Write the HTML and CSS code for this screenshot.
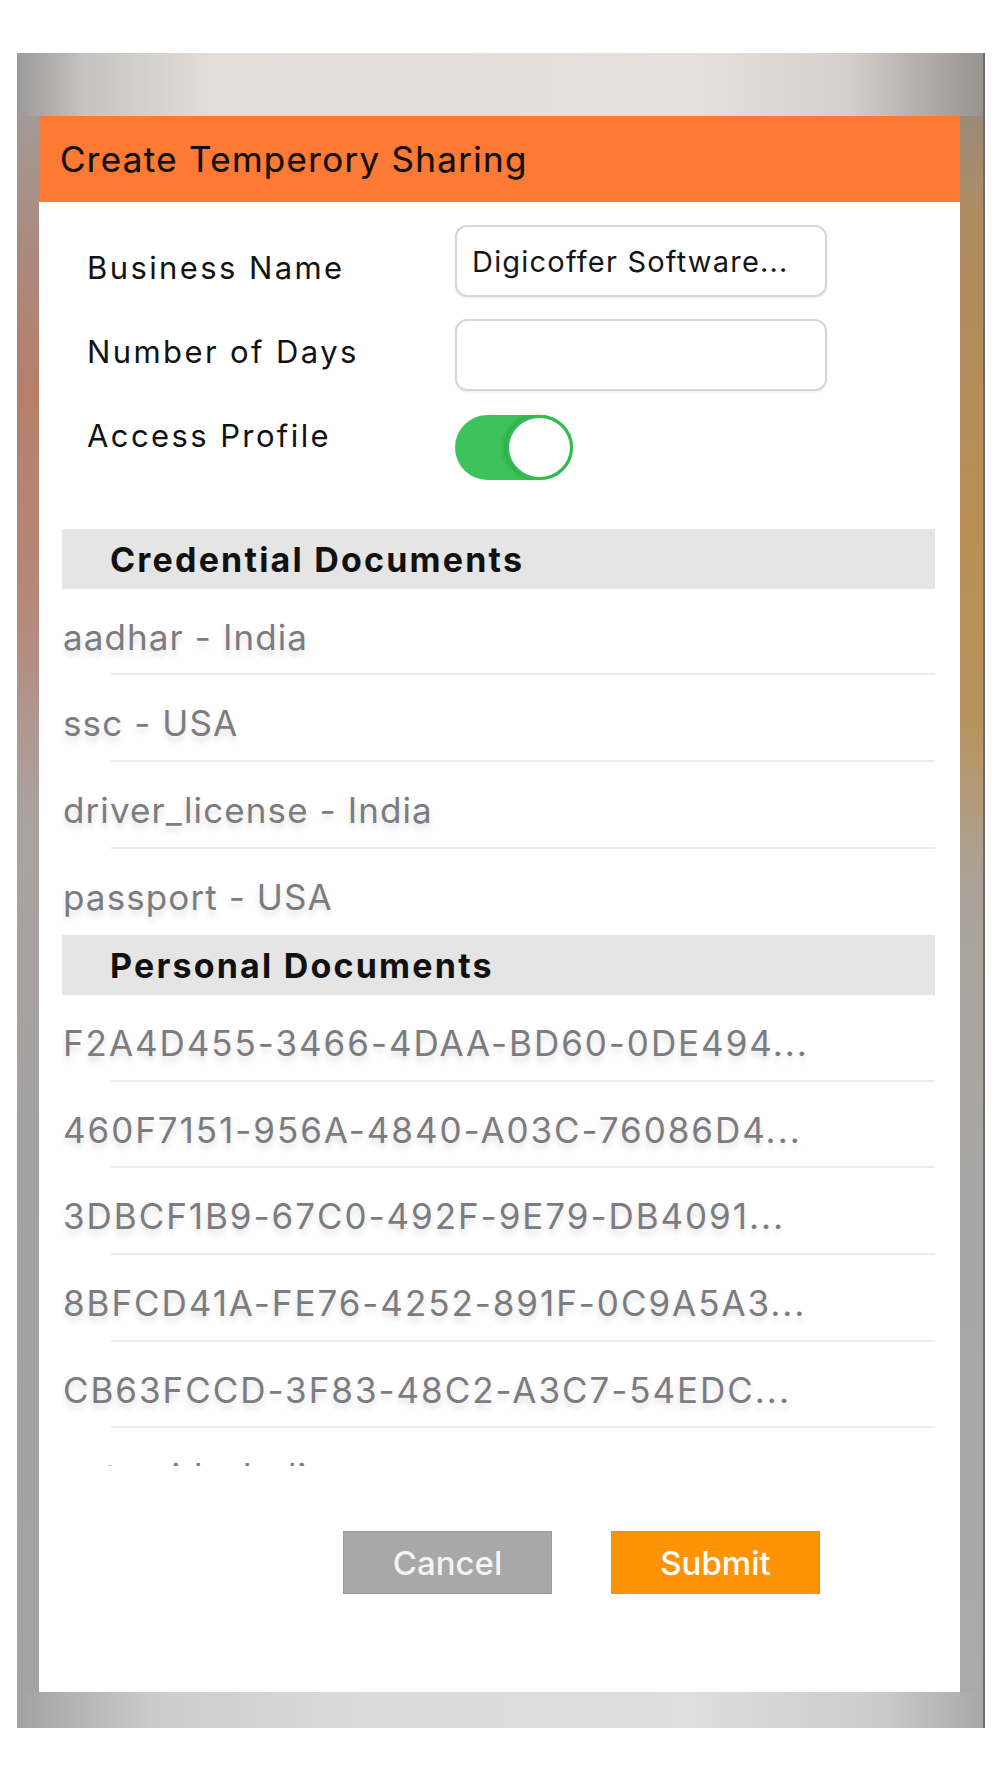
FILE: index.html
```html
<!DOCTYPE html>
<html lang="en">
<head>
<meta charset="utf-8">
<title>Create Temperory Sharing</title>
<link rel="stylesheet" href="styles.css">
</head>
<body>
<div class="frame">
  <div class="panel">
    <div class="header"><span class="title">Create Temperory Sharing</span></div>
    <div class="form">
      <div class="labels">
        <div class="label">Business Name</div>
        <div class="label">Number of Days</div>
        <div class="label">Access Profile</div>
      </div>
      <div class="controls">
        <div class="input">Digicoffer Software...</div>
        <div class="input"></div>
        <div class="toggle"><div class="knob"></div></div>
      </div>
    </div>
    <div class="list">
      <div class="section">Credential Documents</div>
      <div class="item">aadhar - India</div>
      <div class="item">ssc - USA</div>
      <div class="item">driver_license - India</div>
      <div class="item last">passport - USA</div>
      <div class="section">Personal Documents</div>
      <div class="item guid">F2A4D455-3466-4DAA-BD60-0DE494...</div>
      <div class="item guid">460F7151-956A-4840-A03C-76086D4...</div>
      <div class="item guid">3DBCF1B9-67C0-492F-9E79-DB4091...</div>
      <div class="item guid">8BFCD41A-FE76-4252-891F-0C9A5A3...</div>
      <div class="item guid">CB63FCCD-3F83-48C2-A3C7-54EDC...</div>
      <div class="item">voter_id - India</div>
    </div>
    <div class="actions">
      <div class="btn cancel">Cancel</div>
      <div class="btn submit">Submit</div>
    </div>
  </div>
</div>
</body>
</html>
```
FILE: styles.css
```css
html, body {
  margin: 0;
  padding: 0;
  background: #ffffff;
}

body {
  font-family: Inter, "Liberation Sans", Arial, sans-serif;
  width: 1000px;
  height: 1778px;
  overflow: hidden;
}

.frame {
  margin: 53px 0 0 17px;
  width: 968px;
  height: 1675px;
  box-sizing: border-box;
  padding: 63px 23px 36px 22px;
  border-right: 2px solid #6e6a66;
  background:
    linear-gradient(to right, #9a9a9a 0, #c6c3c0 7%, #e2ddd8 20%, #e6e1dc 70%, #d6d0ca 86%, #979390 100%) top / 100% 63px no-repeat,
    linear-gradient(to right, #a2a2a2 0, #cbcbcb 14%, #dbdbdb 35%, #dedede 70%, #cacaca 90%, #a8a8a8 100%) bottom / 100% 36px no-repeat,
    linear-gradient(to bottom, #a0a0a0 0, #ab8a7e 12%, #b67e6c 20%, #b58a7c 34%, #aaa3a1 46%, #a2a2a2 66%, #a4a4a4 100%) left / 22px 100% no-repeat,
    linear-gradient(to bottom, #8d8884 0, #b08c62 10%, #ba8e56 28%, #b8935f 40%, #aba39a 50%, #a7a7a7 68%, #aaaaaa 100%) right / 23px 100% no-repeat;
}

.panel {
  width: 921px;
  height: 1576px;
  background: #ffffff;
  display: flex;
  flex-direction: column;
}

.header {
  height: 86px;
  flex: none;
  background: #fd7a35;
  display: flex;
  align-items: center;
  padding-left: 21px;
}

.title {
  font-size: 35px;
  letter-spacing: 1.3px;
  color: #111111;
  text-shadow: 0 0 1px rgba(0, 0, 0, 0.35);
}

.form {
  display: flex;
  padding-left: 48px;
  height: 278px;
  flex: none;
}

.labels {
  width: 368px;
  display: flex;
  flex-direction: column;
  gap: 48px;
  padding-top: 48px;
}

.label {
  font-size: 31px;
  line-height: 36px;
  letter-spacing: 2.4px;
  color: #121212;
  white-space: nowrap;
}

.controls {
  display: flex;
  flex-direction: column;
  gap: 22px;
  padding-top: 23px;
}

.input {
  width: 372px;
  height: 72px;
  box-sizing: border-box;
  border: 2px solid #d6d6d6;
  border-radius: 12px;
  box-shadow: 0 1px 2px rgba(0, 0, 0, 0.08);
  display: flex;
  align-items: center;
  padding-left: 15px;
  font-size: 29px;
  letter-spacing: 1.2px;
  color: #151515;
  white-space: nowrap;
}

.toggle {
  margin-top: 2px;
  width: 118px;
  height: 65px;
  border-radius: 33px;
  background: #3cc35b;
  display: flex;
  justify-content: flex-end;
}

.knob {
  width: 67px;
  height: 65px;
  box-sizing: border-box;
  border: 3px solid #33bb52;
  border-radius: 50%;
  background: #ffffff;
  box-shadow: -3px 0 4px rgba(0, 0, 0, 0.14);
}

.list {
  margin: 49px 25px 0 23px;
  height: 937px;
  flex: none;
  overflow: hidden;
}

.section {
  height: 59.5px;
  box-sizing: border-box;
  background: #e5e5e5;
  padding: 3px 0 0 48px;
  font-size: 34px;
  font-weight: 700;
  line-height: 56.5px;
  letter-spacing: 2.2px;
  color: #111111;
}

.item {
  margin-left: 49px;
  padding-top: 12px;
  line-height: 72.7px;
  border-bottom: 2px solid #ececec;
  text-indent: -48px;
  font-size: 35px;
  letter-spacing: 1.1px;
  color: #7c7c80;
  white-space: nowrap;
  text-shadow: 0 5px 6px rgba(0, 0, 0, 0.13);
}

.item.last {
  border-bottom-color: transparent;
}

.item.guid {
  letter-spacing: 1.95px;
}

.actions {
  display: flex;
  gap: 59px;
  margin-top: 65px;
  padding-left: 304px;
}

.btn {
  width: 209px;
  height: 63px;
  box-sizing: border-box;
  display: flex;
  align-items: center;
  justify-content: center;
  font-size: 33px;
  font-weight: 500;
  color: #ffffff;
}

.cancel {
  background: #a8a8a8;
  border: 1px solid #9a9a9a;
  color: #f4f4f4;
}

.submit {
  background: #ff9306;
  border: 1px solid #fb8a00;
}
```
